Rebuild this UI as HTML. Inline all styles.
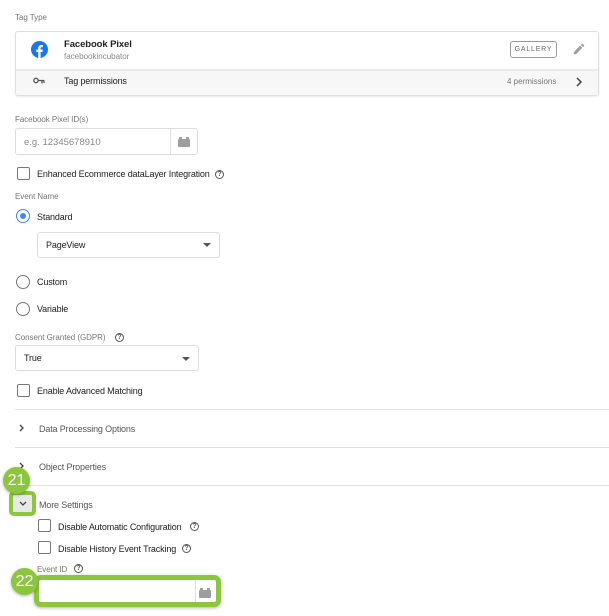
<!DOCTYPE html>
<html><head><meta charset="utf-8"><style>
*{box-sizing:border-box;margin:0;padding:0}
body{width:609px;height:616px;background:#fff;font-family:"Liberation Sans",sans-serif;position:relative;overflow:hidden;color:#212121}
.a{position:absolute;white-space:nowrap}
.lbl{font-size:8px;color:#757575;letter-spacing:-0.05px}
.t{font-size:9px;color:#212121;letter-spacing:-0.15px}
.cb{position:absolute;width:13px;height:13px;border:1.5px solid #777;border-radius:2px;background:#fff}
.rd{position:absolute;width:14px;height:14px;border:1.5px solid #777;border-radius:50%}
.inp{position:absolute;border:1px solid #dcdcdc;border-radius:3px;background:#fff}
.q{position:absolute;width:9px;height:9px;border:1.2px solid #555;border-radius:50%;font-size:7px;line-height:7px;text-align:center;color:#555;font-weight:bold}
.hr{position:absolute;left:15px;right:0;height:1px;background:#e0e0e0}
.badge{position:absolute;width:27px;height:27px;border-radius:50%;background:#8cc63f;color:#fff;font-size:16px;line-height:27px;text-align:center;box-shadow:0 1px 3px rgba(0,0,0,.3)}
.brick{position:absolute;width:12px;height:8px;background:#9e9e9e;border-radius:1px}
.brick:before,.brick:after{content:"";position:absolute;top:-2px;width:3px;height:2px;background:#9e9e9e}
.brick:before{left:1px}.brick:after{right:1px}
.arr{position:absolute;width:0;height:0;border-left:4px solid transparent;border-right:4px solid transparent;border-top:4px solid #555}
</style></head><body>
<div class="a lbl" style="left:15px;top:13px">Tag Type</div>
<div class="a" style="left:15px;top:31px;width:584px;height:65px;border:1px solid #e0e0e0;border-radius:3px;overflow:hidden;box-shadow:0 1px 2px rgba(0,0,0,.08)">
 <div class="a" style="left:0;top:37px;width:100%;height:28px;background:#f7f7f7;border-top:2px solid #eaeaea"></div>
</div>
<svg class="a" style="left:31px;top:41px" width="17" height="17" viewBox="0 0 24 24"><circle cx="12" cy="12" r="12" fill="#1877f2"/><path d="M13.5 24v-8.5h2.8l.4-3.3h-3.2v-2c0-.9.3-1.6 1.6-1.6h1.7V5.7c-.3 0-1.3-.1-2.5-.1-2.5 0-4.1 1.5-4.1 4.2v2.4H7.4v3.3h2.8V24z" fill="#fff"/></svg>
<div class="a" style="left:64px;top:39px;font-size:9.5px;font-weight:bold;color:#212121;letter-spacing:-0.1px">Facebook Pixel</div>
<div class="a" style="left:64px;top:52px;font-size:8px;color:#888">facebookincubator</div>
<div class="a" style="left:510px;top:41px;width:47px;height:17px;border:1px solid #999;border-radius:3px;font-size:7px;letter-spacing:.8px;color:#666;text-align:center;line-height:15px">GALLERY</div>
<svg class="a" style="left:572px;top:42px" width="14" height="14" viewBox="0 0 24 24"><path d="M3 17.25V21h3.75L17.8 9.94l-3.75-3.75zM20.7 7.04a1 1 0 0 0 0-1.41l-2.34-2.34a1 1 0 0 0-1.41 0l-1.83 1.83 3.75 3.75z" fill="#9e9e9e"/></svg>
<svg class="a" style="left:33px;top:77px" width="12" height="8" viewBox="0 0 12 8"><circle cx="3" cy="3.5" r="2.2" fill="none" stroke="#555" stroke-width="1.3"/><path d="M5 3.5h6M9 3.5v3M11 3.5v2.5" stroke="#555" stroke-width="1.3"/></svg>
<div class="a t" style="left:64px;top:76px">Tag permissions</div>
<div class="a" style="left:507px;top:77px;font-size:8px;color:#777">4 permissions</div>
<svg class="a" style="left:575px;top:77px" width="8" height="10" viewBox="0 0 8 10"><path d="M2 1l4 4-4 4" fill="none" stroke="#444" stroke-width="1.5"/></svg>

<div class="a lbl" style="left:15px;top:115px">Facebook Pixel ID(s)</div>
<div class="inp" style="left:15px;top:128px;width:183px;height:27px"><div class="a" style="left:154px;top:0;width:1px;height:25px;background:#e0e0e0"></div></div>
<div class="a" style="left:24px;top:137px;font-size:9.5px;color:#888">e.g. 12345678910</div>
<div class="brick" style="left:178px;top:139px"></div>

<div class="cb" style="left:17px;top:167px"></div>
<div class="a t" style="left:37px;top:169px">Enhanced Ecommerce dataLayer Integration</div>
<div class="q" style="left:215px;top:170px">?</div>

<div class="a lbl" style="left:15px;top:192px">Event Name</div>
<div class="rd" style="left:16px;top:209px;border-color:#4285f4"><div class="a" style="left:2.5px;top:2.5px;width:6px;height:6px;border-radius:50%;background:#4285f4"></div></div>
<div class="a t" style="left:37px;top:212px">Standard</div>
<div class="inp" style="left:37px;top:232px;width:183px;height:26px"></div>
<div class="a t" style="left:46px;top:240px">PageView</div>
<div class="arr" style="left:203px;top:243px"></div>
<div class="rd" style="left:16px;top:275px"></div>
<div class="a t" style="left:37px;top:277px">Custom</div>
<div class="rd" style="left:16px;top:302px"></div>
<div class="a t" style="left:37px;top:304px">Variable</div>

<div class="a lbl" style="left:15px;top:333px">Consent Granted (GDPR)</div>
<div class="q" style="left:115px;top:333px">?</div>
<div class="inp" style="left:15px;top:345px;width:184px;height:26px"></div>
<div class="a t" style="left:24px;top:353px">True</div>
<div class="arr" style="left:182px;top:357px"></div>
<div class="cb" style="left:17px;top:384px"></div>
<div class="a t" style="left:37px;top:386px">Enable Advanced Matching</div>

<div class="hr" style="top:409px"></div>
<svg class="a" style="left:19px;top:424px" width="6" height="8" viewBox="0 0 6 8"><path d="M1 1l3 3-3 3" fill="none" stroke="#444" stroke-width="1.3"/></svg>
<div class="a t" style="left:39px;top:424px;color:#555">Data Processing Options</div>
<div class="hr" style="top:447px"></div>
<svg class="a" style="left:19px;top:462px" width="6" height="8" viewBox="0 0 6 8"><path d="M1 1l3 3-3 3" fill="none" stroke="#444" stroke-width="1.3"/></svg>
<div class="a t" style="left:39px;top:462px;color:#555">Object Properties</div>
<div class="hr" style="top:485px"></div>

<div class="a" style="left:9px;top:491px;width:27px;height:25px;border:4px solid #8cc63f;border-radius:5px;background:#e8e8e8"></div>
<svg class="a" style="left:19px;top:501px" width="8" height="6" viewBox="0 0 8 6"><path d="M1 1l3 3 3-3" fill="none" stroke="#444" stroke-width="1.3"/></svg>
<div class="badge" style="left:3px;top:467px">21</div>
<div class="a t" style="left:39px;top:500px;color:#555">More Settings</div>

<div class="cb" style="left:38px;top:519px"></div>
<div class="a t" style="left:58px;top:522px">Disable Automatic Configuration</div>
<div class="q" style="left:190px;top:522px">?</div>
<div class="cb" style="left:38px;top:541px"></div>
<div class="a t" style="left:58px;top:544px">Disable History Event Tracking</div>
<div class="q" style="left:182px;top:544px">?</div>
<div class="a lbl" style="left:37px;top:565px">Event ID</div>
<div class="q" style="left:74px;top:564px">?</div>

<div class="a" style="left:34px;top:575px;width:187px;height:32px;border:5px solid #8cc63f;border-radius:7px;background:#fff;box-shadow:0 1px 3px rgba(0,0,0,.3)"><div class="a" style="left:156px;top:0;width:1px;height:22px;background:#e0e0e0"></div></div>
<div class="brick" style="left:199px;top:590px"></div>
<div class="badge" style="left:11px;top:568px">22</div>
</body></html>
